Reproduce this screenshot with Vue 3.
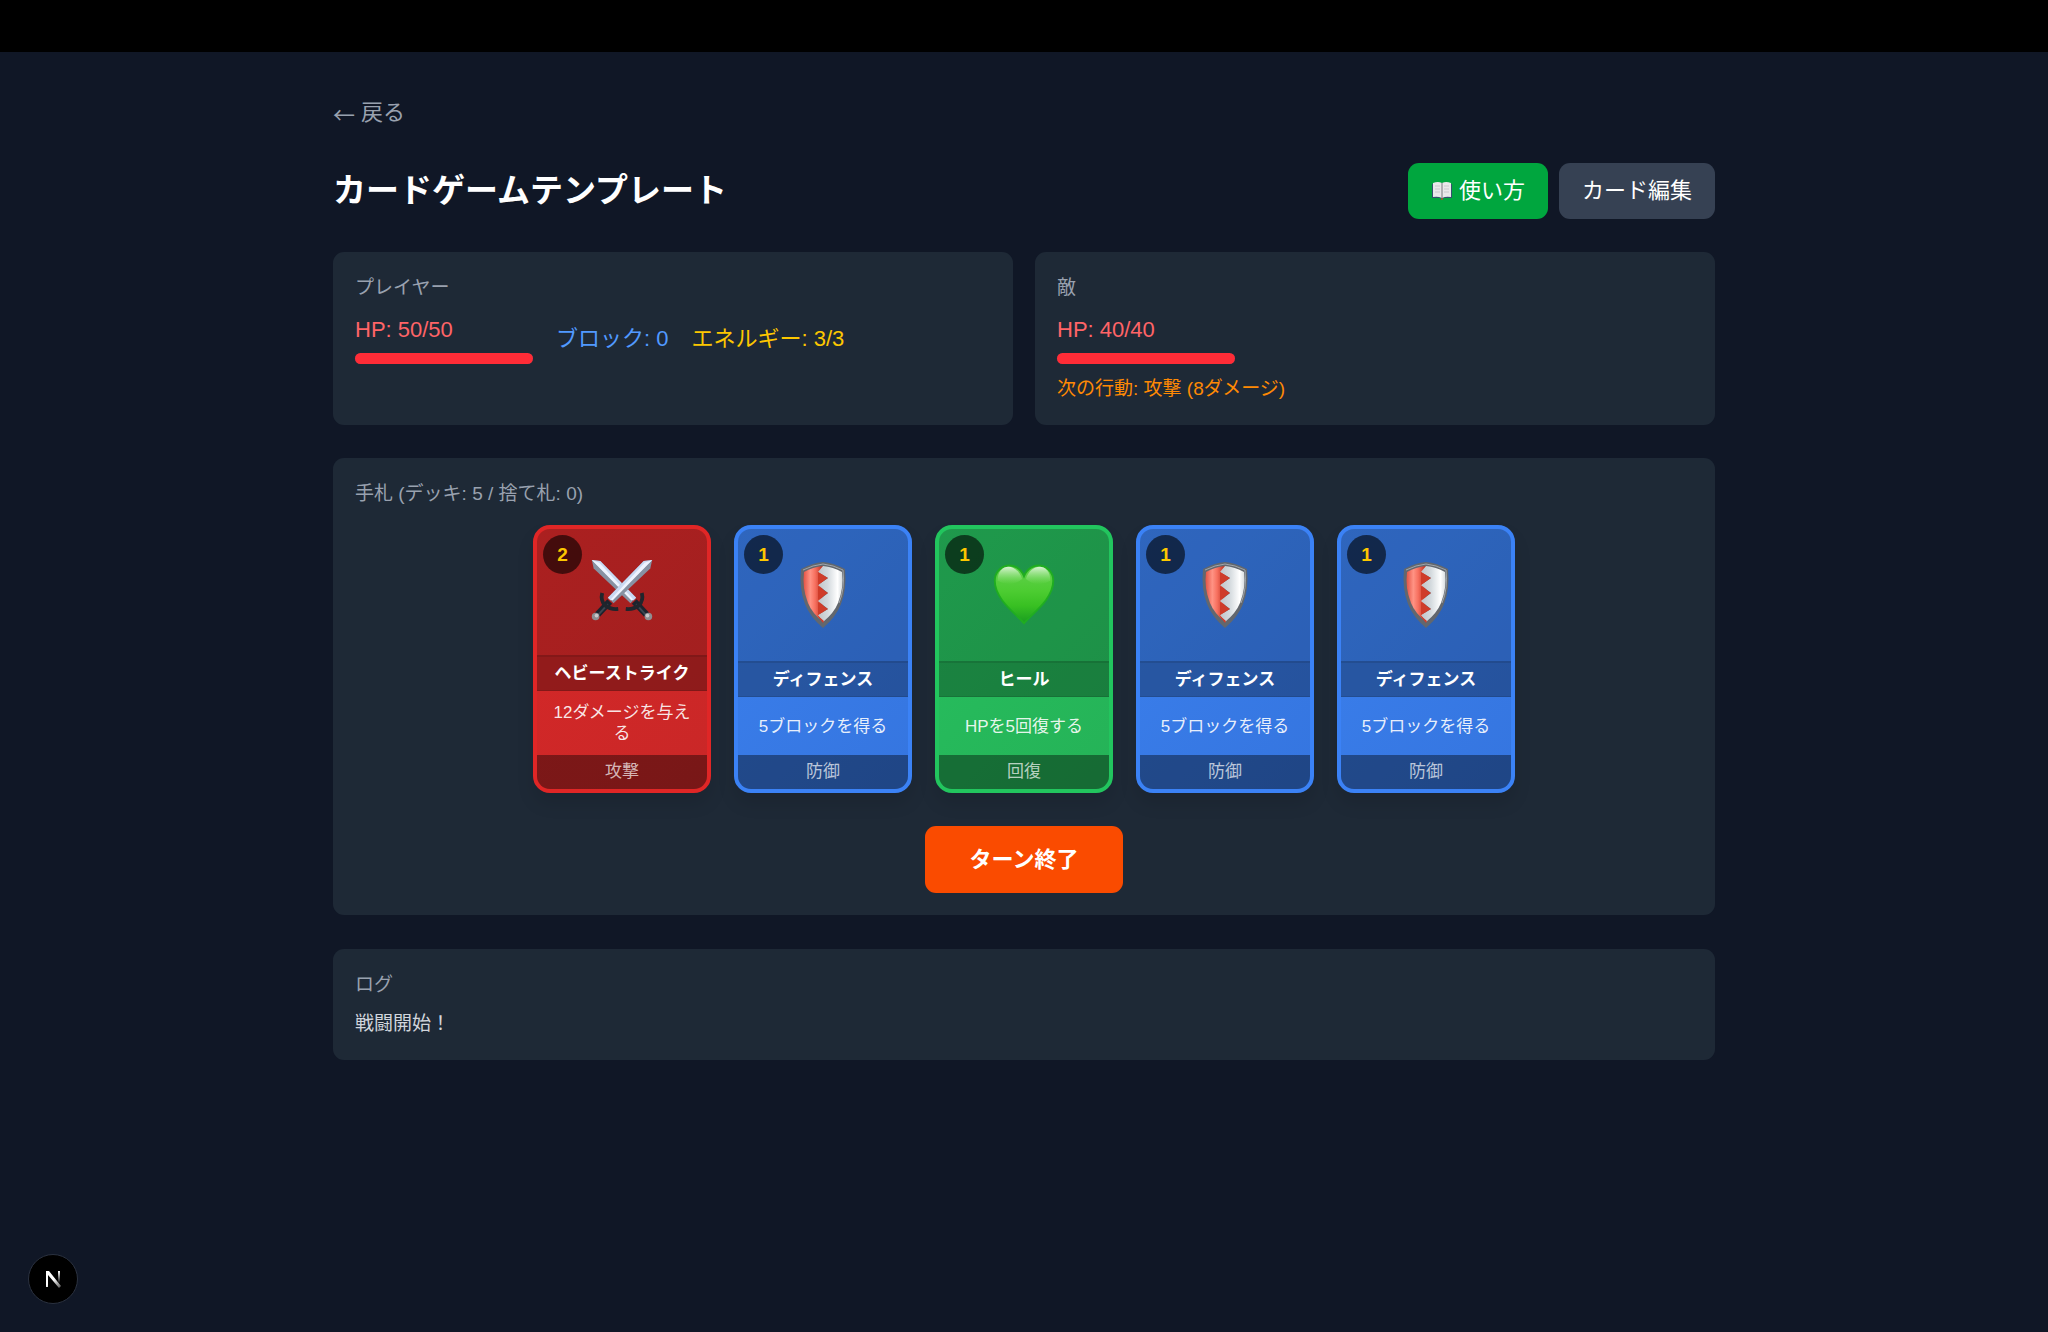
<template>
  <div class="page">
    <div class="topbar"></div>
    <main class="container">
      <a class="back" href="#"><span class="arrow">←</span> 戻る</a>

      <header class="header">
        <h1 class="title">カードゲームテンプレート</h1>
        <div class="actions">
          <button type="button" class="btn btn-green">
            <svg class="book" viewBox="0 0 22 20" aria-hidden="true">
              <path d="M1 3h20v14h-8l-2 1-2-1H1z" fill="#35506e" />
              <path d="M2 2q5-2 9 0q4-2 9 0v14q-5-1-9 1q-4-2-9-1z" fill="#e9e9ea" />
              <path d="M4 5h5M4 8h5M4 11h5M13 5h5M13 8h5M13 11h5" stroke="#c9cacd" />
              <path d="M11 2v15" stroke="#77777d" />
              <path d="M10 17h2v2h-2z" fill="#8d5a3c" />
            </svg>
            使い方
          </button>
          <button type="button" class="btn btn-gray">カード編集</button>
        </div>
      </header>

      <div class="status">
        <section class="panel">
          <h2 class="label">プレイヤー</h2>
          <div class="stats">
            <div>
              <div class="hp">HP: {{ player.hp }}/{{ player.maxHp }}</div>
              <div class="bar">
                <div class="bar-fill" :style="{ width: percent(player) }"></div>
              </div>
            </div>
            <div class="block">ブロック: {{ player.block }}</div>
            <div class="energy">エネルギー: {{ player.energy }}/{{ player.maxEnergy }}</div>
          </div>
        </section>

        <section class="panel">
          <h2 class="label">敵</h2>
          <div class="hp">HP: {{ enemy.hp }}/{{ enemy.maxHp }}</div>
          <div class="bar">
            <div class="bar-fill" :style="{ width: percent(enemy) }"></div>
          </div>
          <div class="next">次の行動: 攻撃 ({{ enemy.damage }}ダメージ)</div>
        </section>
      </div>

      <section class="panel hand">
        <h2 class="label">手札 (デッキ: 5 / 捨て札: 0)</h2>
        <div class="cards">
          <button
            v-for="(card, index) in hand"
            :key="index"
            type="button"
            class="card"
            :class="card.kind"
          >
            <span class="cost">{{ card.cost }}</span>
            <span class="art">
              <svg v-if="card.kind === 'attack'" class="icon" viewBox="-2 0 70 70" aria-hidden="true">
                <g v-for="side in 2" :key="side" :transform="side === 1 ? '' : 'translate(66 0) scale(-1 1)'">
                  <path d="M1 1l9 1 38 39-6 6L3 10z" fill="#8792a3" />
                  <path d="M1 1l9 1 38 39-3 3z" fill="#c9d9f2" />
                  <path d="M1 1l8 3 36 39-2 1z" fill="#eef4ff" />
                  <path d="M46 45l13 14" stroke="#1c232d" stroke-width="7" />
                  <path d="M48 48l11 12" stroke="#3c4651" stroke-width="2" />
                  <path d="M54 36q2 8-3 13q-6 5-14 4" fill="none" stroke="#20252c" stroke-width="4" />
                  <circle cx="61" cy="61" r="4" fill="#8e8e92" />
                  <circle cx="60" cy="60" r="2" fill="#c9c9cc" />
                </g>
              </svg>
              <svg v-else-if="card.kind === 'defense'" class="icon" viewBox="0 0 66 66" aria-hidden="true">
                <defs>
                  <linearGradient :id="`red${index}`">
                    <stop offset="0" stop-color="#e35345" />
                    <stop offset=".35" stop-color="#ff9384" />
                    <stop offset=".6" stop-color="#f7705f" />
                    <stop offset="1" stop-color="#b92c1b" />
                  </linearGradient>
                  <linearGradient :id="`white${index}`">
                    <stop offset="0" stop-color="#bfc5ca" />
                    <stop offset=".4" stop-color="#d4dade" />
                    <stop offset=".8" stop-color="#ffffff" />
                    <stop offset="1" stop-color="#d7dcdf" />
                  </linearGradient>
                </defs>
                <path d="M11 7Q22 1 33 0Q44 1 55 7Q57 27 51 42Q46 55 33 66Q20 55 15 42Q9 27 11 7z" fill="#62676e" />
                <path d="M13 8Q23 3 33 2Q43 3 53 8Q55 27 49 41" fill="none" stroke="#a0a5aa" />
                <path d="M14 10Q23 5 33 4v56Q22 51 18 41Q12 26 14 10z" :fill="`url(#red${index})`" />
                <path
                  d="M33 4Q43 5 52 10Q54 26 48 41Q44 51 33 60l-5-7 10-6-10-8 10-8-10-8 10-7-10-6z"
                  :fill="`url(#white${index})`"
                />
                <path d="M28 10l10 6-10 7zM28 24l10 7-10 7zM28 40l10 7-10 6zM27 53l7 6-1 2z" fill="#cf3c2a" />
              </svg>
              <svg v-else class="icon" viewBox="-2 0 70 70" aria-hidden="true">
                <defs>
                  <linearGradient id="heart" x2="0" y2="1">
                    <stop offset="0" stop-color="#63d04f" />
                    <stop offset=".45" stop-color="#4ccc31" />
                    <stop offset=".7" stop-color="#38c022" />
                    <stop offset="1" stop-color="#199c20" />
                  </linearGradient>
                  <linearGradient id="shine" x2="0" y2="1">
                    <stop offset="0" stop-color="#ffffff" stop-opacity=".75" />
                    <stop offset="1" stop-color="#a4ee8c" stop-opacity="0" />
                  </linearGradient>
                </defs>
                <path
                  d="M33 65C25 55 2 40 2 20C2 2 26-3 33 15C40-3 64 2 64 20C64 40 41 55 33 65z"
                  fill="url(#heart)"
                  stroke="#20ad20"
                  stroke-width="2"
                />
                <path d="M5 20C5 0 26 1 31 18Q19 28 5 20z" fill="url(#shine)" />
                <path d="M61 20C61 0 40 1 35 18Q47 28 61 20z" fill="url(#shine)" />
              </svg>
            </span>
            <span class="name">{{ card.name }}</span>
            <span class="desc">{{ card.desc }}</span>
            <span class="type">{{ card.type }}</span>
          </button>
        </div>
        <button type="button" class="end-turn">ターン終了</button>
      </section>

      <section class="panel">
        <h2 class="label">ログ</h2>
        <p v-for="(line, index) in log" :key="index" class="log-line">{{ line }}</p>
      </section>
    </main>

    <button type="button" class="dev-badge" aria-label="Next.js">
      <svg viewBox="0 0 20 20" aria-hidden="true">
        <defs>
          <linearGradient id="stem" x2="0" y2="1">
            <stop offset="0" stop-color="#fff" />
            <stop offset="1" stop-color="#fff" stop-opacity="0" />
          </linearGradient>
          <linearGradient id="diagonal" gradientUnits="userSpaceOnUse" x1="10" y1="11" x2="17" y2="20">
            <stop offset="0" stop-color="#fff" />
            <stop offset="1" stop-color="#fff" stop-opacity=".3" />
          </linearGradient>
        </defs>
        <path d="M3 2h3l12 15-2 2L5 6v12H3z" fill="url(#diagonal)" />
        <path d="M15 2h2v12h-2z" fill="url(#stem)" />
      </svg>
    </button>
  </div>
</template>

<script setup>
import { ref } from 'vue'

const player = ref({ hp: 50, maxHp: 50, block: 0, energy: 3, maxEnergy: 3 })
const enemy = ref({ hp: 40, maxHp: 40, damage: 8 })
const log = ref(['戦闘開始！'])

const defense = { kind: 'defense', cost: 1, name: 'ディフェンス', desc: '5ブロックを得る', type: '防御' }

const hand = ref([
  { kind: 'attack', cost: 2, name: 'ヘビーストライク', desc: '12ダメージを与える', type: '攻撃' },
  { ...defense },
  { kind: 'heal', cost: 1, name: 'ヒール', desc: 'HPを5回復する', type: '回復' },
  { ...defense },
  { ...defense }
])

const percent = (unit) => `${(unit.hp / unit.maxHp) * 100}%`
</script>

<style>
body {
  background: #101726;
}
</style>

<style scoped>
.page {
  min-height: 100vh;
  background: #101726;
  color: #fff;
  font-family: "Liberation Sans", "Noto Sans CJK JP", sans-serif;
  font-size: 22px;
  line-height: 34px;
}

.page * {
  box-sizing: border-box;
}

.topbar {
  height: 52px;
  background: #000;
}

.container {
  max-width: 1426px;
  margin: 0 auto;
  padding: 44px 22px;
}

button {
  margin: 0;
  border: 0;
  color: inherit;
  font: inherit;
  cursor: pointer;
}

h1,
h2,
p {
  margin: 0;
}

.back {
  display: flex;
  gap: 6px;
  width: fit-content;
  color: #99a1af;
  text-decoration: none;
}

.arrow {
  font-family: "Noto Sans CJK JP", sans-serif;
}

.header {
  display: flex;
  justify-content: space-between;
  align-items: center;
  margin: 33px 0;
}

.title {
  font-size: 33px;
  line-height: 44px;
  font-weight: bold;
}

.actions {
  display: flex;
  gap: 11px;
}

.btn {
  display: flex;
  align-items: center;
  gap: 6px;
  padding: 11px 23px;
  border-radius: 11px;
}

.btn-green {
  background: #00a63e;
}

.btn-gray {
  background: #364153;
}

.book {
  width: 22px;
  height: 20px;
}

.status {
  display: grid;
  grid-template-columns: 1fr 1fr;
  gap: 22px;
}

.panel {
  margin-bottom: 34px;
  padding: 22px;
  border-radius: 11px;
  background: #1e2936;
}

.status .panel {
  margin-bottom: 0;
}

.label {
  margin-bottom: 11px;
  color: #99a1af;
  font-size: 19px;
  line-height: 28px;
  font-weight: normal;
}

.stats {
  display: flex;
  align-items: center;
  gap: 23px;
}

.hp {
  color: #ff6467;
}

.bar {
  width: 178px;
  height: 11px;
  margin-top: 6px;
  border-radius: 6px;
  background: #364153;
}

.bar-fill {
  height: 100%;
  border-radius: 6px;
  background: #ff2c37;
}

.block {
  color: #5199ff;
}

.energy {
  color: #fdc700;
}

.next {
  margin-top: 11px;
  color: #ff8904;
  font-size: 19px;
  line-height: 28px;
}

.hand {
  margin-top: 33px;
}

.hand .label {
  margin-bottom: 17px;
}

.cards {
  display: flex;
  justify-content: center;
  flex-wrap: wrap;
  gap: 23px;
}

.card {
  position: relative;
  display: flex;
  flex-direction: column;
  width: 178px;
  height: 268px;
  padding: 0;
  overflow: hidden;
  border: 4px solid;
  border-radius: 17px;
  box-shadow: 0 11px 17px rgba(0, 0, 0, 0.1);
  font-size: 17px;
  line-height: 21px;
}

.attack {
  border-color: #e02626;
  background: linear-gradient(135deg, #d62828, #c92727);
}

.defense {
  border-color: #3b82f6;
  background: linear-gradient(135deg, #3b80ee, #3575df);
}

.heal {
  border-color: #22c55e;
  background: linear-gradient(135deg, #27c05f, #25b257);
}

.cost {
  position: absolute;
  top: 6px;
  left: 6px;
  width: 39px;
  height: 39px;
  border-radius: 50%;
  background: rgba(0, 0, 0, 0.6);
  color: #fdc700;
  font-size: 19px;
  line-height: 39px;
  font-weight: bold;
}

.art {
  display: flex;
  flex: 1;
  justify-content: center;
  align-items: center;
  background: rgba(0, 0, 0, 0.2);
}

.icon {
  width: 66px;
  height: 66px;
}

.name {
  padding: 6px;
  border-top: 2px solid rgba(0, 0, 0, 0.1);
  border-bottom: 1px solid rgba(0, 0, 0, 0.1);
  background: rgba(0, 0, 0, 0.3);
  font-weight: bold;
}

.desc {
  display: flex;
  justify-content: center;
  align-items: center;
  min-height: 58px;
  padding: 11px;
  color: rgba(255, 255, 255, 0.9);
}

.type {
  padding: 6px;
  background: rgba(0, 0, 0, 0.4);
  color: rgba(255, 255, 255, 0.7);
  line-height: 22px;
}

.end-turn {
  display: block;
  margin: 33px auto 0;
  padding: 17px 45px;
  border-radius: 11px;
  background: #fa4b00;
  font-weight: bold;
  line-height: 33px;
}

.log-line {
  color: #d1d5dc;
  font-size: 19px;
  line-height: 28px;
}

/* floating dev tools button */
.dev-badge {
  position: fixed;
  left: 28px;
  bottom: 28px;
  display: flex;
  justify-content: center;
  align-items: center;
  width: 50px;
  height: 50px;
  padding: 0;
  border: 1px solid #2b3240;
  border-radius: 50%;
  background: #000;
}

.dev-badge svg {
  width: 20px;
  height: 20px;
}
</style>
